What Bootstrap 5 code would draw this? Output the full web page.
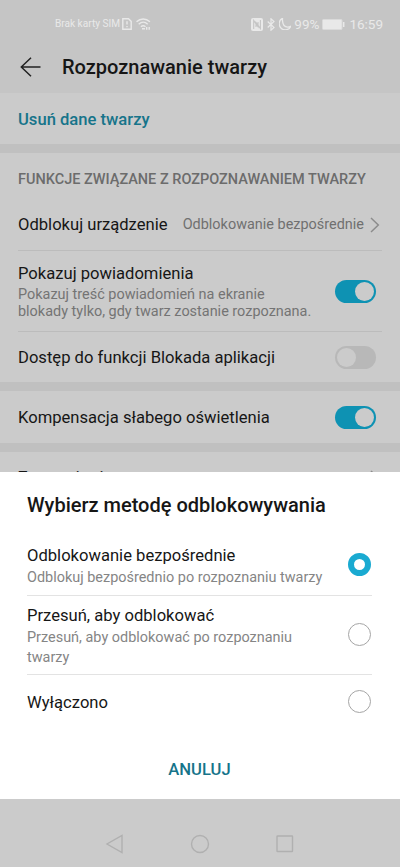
<!DOCTYPE html>
<html lang="pl">
<head>
<meta charset="utf-8">
<meta name="viewport" content="width=device-width, initial-scale=1">
<title>Rozpoznawanie twarzy</title>
<link href="https://cdn.jsdelivr.net/npm/bootstrap@5.3.0/dist/css/bootstrap.min.css" rel="stylesheet">
<style>
body{font-family:Roboto,"Noto Sans",sans-serif;background:#cbcbcb;color:#161616;font-size:16.6px;line-height:20px;width:400px;height:867px;overflow:hidden}
svg{display:block;flex:none}
.phone{height:867px}
.topbar{height:93px;background:#c5c5c5}
.status{height:48px;padding:0 17px 0 55px;color:#e9e9e9;font-size:10.1px}
.status .clock{font-size:13.5px}
.title-row{height:37px;padding-left:20px}
.title-row h1{font-size:20px;line-height:26px;margin:1px 0 0 21px;font-weight:500}
.gapband{height:9px;background:#c0c0c0;flex:none}
.pane{padding:0 18px;flex:none}
.accent{color:#16748a;font-weight:500}
.sect{font-size:14.5px;font-weight:500;color:#6c6c6c;height:53px;white-space:nowrap}
.line{border-bottom:1px solid #bcbcbc}
.val{color:#707070;font-size:14.45px}
.sub{color:#747474;font-size:14.45px;line-height:17.4px}
.toggle{width:41px;height:23px;border-radius:12px;background:#0e92b3;padding:2px;margin-right:6px;flex:none}
.toggle i{display:block;width:19px;height:19px;border-radius:50%;background:#cbcbcb}
.toggle.off{background:#b8b8b8}
.sheet{height:327px;background:#fff;padding:0 28px 0 27px;flex:none}
.sheet h2{font-size:20px;line-height:26px;font-weight:500;margin:0;padding-top:20px;height:63px;white-space:nowrap}
.opt{border-bottom:1px solid #e3e3e3}
.opt .sub{color:#858585;line-height:19.5px;padding-top:2px}
.ring{width:23px;height:23px;border-radius:50%;border:1.3px solid #a5a5a5;flex:none;margin-right:1px;margin-top:-1px}
.ring.on{border:6.3px solid #1aaad1}
.navkeys{height:68px;padding-top:35px}
.down{padding-top:2px}
</style>
<script src="https://cdn.jsdelivr.net/npm/bootstrap@5.3.0/dist/js/bootstrap.bundle.min.js"></script>
</head>
<body>
<div class="phone d-flex flex-column overflow-hidden">
  <header class="topbar flex-shrink-0">
    <div class="status d-flex align-items-center justify-content-between">
      <div class="d-flex align-items-center">
        <span class="sim">Brak karty SIM</span>
        <svg width="10" height="12" viewBox="0 0 10 12" style="margin-left:2px" fill="none" stroke="#e9e9e9" stroke-width="1.4"><path d="M.8.8h5.7l2.7 2.6v7.8H.8zM5 3.2v3.4M5 8v1.3"/></svg>
        <svg width="15" height="12" viewBox="0 0 15 12" style="margin-left:4px" fill="none" stroke="#e9e9e9" stroke-width="1.400"><path d="M.5 3.700c4-3.600 9.400-3.600 13.400 0M2.700 6.200c2.700-2.500 6.300-2.500 9 0M4.900 8.700c1.500-1.300 3.100-1.300 4.600 0"/><path d="M6 10.700h3M10.700 9v2.700M13.200 9v2.700"/></svg>
      </div>
      <div class="d-flex align-items-center">
        <svg width="12" height="13" viewBox="0 0 12 13"><rect width="12" height="13" rx="2" fill="#e9e9e9"/><path d="M2.700 11V2.500L7 8.700V4M9.400 2v8.500L5 4.500V9" fill="none" stroke="#c5c5c5" stroke-width="1.100"/></svg>
        <svg width="8" height="13" viewBox="0 0 8 13" style="margin-left:4px" fill="none" stroke="#e9e9e9" stroke-width="1.200"><path d="M.7 3.500l6.300 6-3 2.700V.8l3 2.700-6.300 6"/></svg>
        <svg width="12" height="12" viewBox="0 0 12 12" style="margin-left:4px"><path d="M3.500.3C-.8 2.500-.6 8 2.400 10.400 5.500 12.800 10.200 12 11.700 8.400 8 10 4.500 8.500 3.900 5.200 3.600 3.400 3.200 1.700 3.500.3z" fill="none" stroke="#e9e9e9" stroke-width="1.300"/></svg>
        <span class="clock pct" style="margin-left:3px">99%</span>
        <svg width="23" height="11" viewBox="0 0 23 11" style="margin-left:3px"><rect x=".5" y=".5" width="19.500" height="10" rx="1" fill="#e9e9e9" stroke="#dadada"/><path d="M21.700 3v5" stroke="#e9e9e9" stroke-width="1.500"/></svg>
        <span class="clock hour" style="margin-left:4px">16:59</span>
      </div>
    </div>
    <div class="title-row d-flex align-items-center">
      <svg width="21" height="20" viewBox="0 0 21 20" fill="none" stroke="#222" stroke-width="1.500"><path d="M20.500 10H1.500M11 .7L1.300 10l9.700 9.300"/></svg>
      <h1>Rozpoznawanie twarzy</h1>
    </div>
  </header>

  <section class="pane d-flex align-items-center accent down" style="height:51px"><span>Usuń dane twarzy</span></section>
  <div class="gapband"></div>
  <section class="pane">
    <div class="sect d-flex align-items-center"><span>FUNKCJE ZWIĄZANE Z ROZPOZNAWANIEM TWARZY</span></div>
    <div class="line d-flex align-items-center" style="height:45px;padding-bottom:7px">
      <span class="text-nowrap">Odblokuj urządzenie</span>
      <span class="val ms-auto text-nowrap">Odblokowanie bezpośrednie</span>
      <svg width="10" height="16" viewBox="0 0 10 16" style="margin-left:6px;margin-right:2px" fill="none" stroke="#8c8c8c" stroke-width="1.500"><path d="M1 1l7.300 7L1 15"/></svg>
    </div>
    <div class="line d-flex align-items-center justify-content-between" style="height:81px">
      <div class="text-nowrap down"><div>Pokazuj powiadomienia</div><div class="sub" style="padding-top:2px">Pokazuj treść powiadomień na ekranie<br>blokady tylko, gdy twarz zostanie rozpoznana.</div></div>
      <span class="toggle d-flex justify-content-end"><i></i></span>
    </div>
    <div class="d-flex align-items-center justify-content-between" style="height:50px">
      <span class="down">Dostęp do funkcji Blokada aplikacji</span><span class="toggle off d-flex"><i></i></span>
    </div>
  </section>
  <div class="gapband"></div>
  <section class="pane d-flex align-items-center justify-content-between" style="height:52px">
    <span class="down">Kompensacja słabego oświetlenia</span><span class="toggle d-flex justify-content-end"><i></i></span>
  </section>
  <div class="gapband"></div>
  <section class="pane overflow-hidden d-flex justify-content-between" style="height:20px;padding-top:16px">
    <span>Zastrzeżenia</span>
    <svg width="10" height="16" viewBox="0 0 10 16" style="margin-right:2px;margin-top:2px" fill="none" stroke="#8c8c8c" stroke-width="1.500"><path d="M1 1l7.300 7L1 15"/></svg>
  </section>

  <section class="sheet">
    <h2>Wybierz metodę odblokowywania</h2>
    <div class="opt d-flex align-items-center justify-content-between" style="height:61px">
      <div class="text-nowrap" style="padding-top:3px"><div>Odblokowanie bezpośrednie</div><div class="sub">Odblokuj bezpośrednio po rozpoznaniu twarzy</div></div>
      <span class="ring on"></span>
    </div>
    <div class="opt d-flex align-items-center justify-content-between" style="height:79px">
      <div class="text-nowrap" style="padding-top:3px"><div>Przesuń, aby odblokować</div><div class="sub">Przesuń, aby odblokować po rozpoznaniu<br>twarzy</div></div>
      <span class="ring"></span>
    </div>
    <div class="d-flex align-items-center justify-content-between" style="height:54px"><span class="down">Wyłączono</span><span class="ring"></span></div>
    <div class="accent text-center" style="padding-top:31px">ANULUJ</div>
  </section>

  <nav class="navkeys d-flex justify-content-center">
    <svg width="190" height="20" viewBox="0 0 190 20" fill="none" stroke="#b0b0b0" stroke-width="1.400"><path d="M17 1.500v17L2 10z"/><circle cx="95" cy="10" r="8.500"/><rect x="172" y="2" width="15.500" height="15.500" rx=".5"/></svg>
  </nav>
</div>
</body>
</html>
